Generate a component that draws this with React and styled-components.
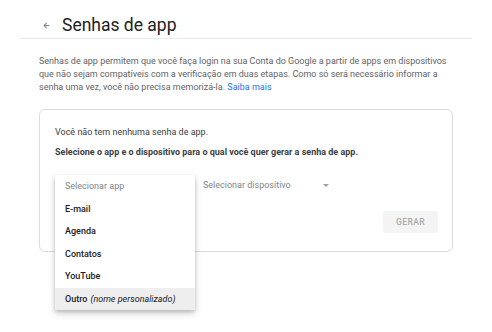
import styled, { createGlobalStyle } from 'styled-components';

const GlobalStyle = createGlobalStyle`
  html, body {
    margin: 0;
    padding: 0;
    background: #fff;
    font-family: Roboto, "Liberation Sans", Arial, sans-serif;
    -webkit-font-smoothing: antialiased;
  }
`;

const Page = styled.div`
  width: 492px;
  height: 332px;
  overflow: hidden;
`;

const Header = styled.header`
  margin: 0 20px;
  height: 39px;
  box-sizing: border-box;
  padding: 12px 0 0 22px;
  display: flex;
  align-items: center;
  gap: 11px;
  border-bottom: 1px solid #e8eaed;
`;

const BackArrow = styled.svg`
  width: 9px;
  height: 9px;
  fill: #5f6368;
`;

const Title = styled.h1`
  margin: 0;
  font-size: 17.5px;
  line-height: 22px;
  font-weight: 400;
  color: #202124;
`;

const Content = styled.main`
  padding: 16px 39px 0 39px;
`;

const Intro = styled.p`
  margin: 0;
  font-size: 9px;
  line-height: 13px;
  color: #5f6368;
`;

const Link = styled.a`
  color: #1a73e8;
  text-decoration: none;
`;

const Card = styled.section`
  position: relative;
  margin-top: 15px;
  width: 414px;
  height: 143px;
  box-sizing: border-box;
  border: 1px solid #dadce0;
  border-radius: 6px;
  padding: 16px 14px 18px 15px;
  display: flex;
  flex-direction: column;
`;

const CardText = styled.p`
  margin: 0 0 ${(p) => p.gap || 0}px;
  font-size: 9px;
  line-height: 13px;
  color: #3c4043;
  font-weight: ${(p) => (p.bold ? 700 : 400)};
`;

const SelectRow = styled.div`
  display: flex;
  align-items: center;
  height: 22px;
  margin-top: 15px;
  gap: 8px;
`;

const Select = styled.div`
  width: ${(p) => p.width}px;
  box-sizing: border-box;
  display: flex;
  align-items: center;
  justify-content: space-between;
  font-size: 9px;
  color: #80868b;
  padding-left: ${(p) => p.pad || 0}px;
`;

const Caret = styled.span`
  width: 0;
  height: 0;
  border-left: 3.5px solid transparent;
  border-right: 3.5px solid transparent;
  border-top: 3.5px solid #9aa0a6;
`;

const Actions = styled.div`
  display: flex;
  justify-content: flex-end;
  margin-top: auto;
`;

const Button = styled.button`
  width: 55px;
  height: 22px;
  border: none;
  border-radius: 3px;
  background: #f4f4f4;
  color: #a8abae;
  font-family: inherit;
  font-size: 8.5px;
  font-weight: 500;
  letter-spacing: 0.4px;
  padding: 0;
`;

const Menu = styled.ul`
  position: absolute;
  left: 15px;
  top: 65px;
  width: 140px;
  margin: 0;
  padding: 0;
  list-style: none;
  background: #fff;
  box-shadow: 0 2px 4px rgba(0, 0, 0, 0.2), 0 4px 8px rgba(0, 0, 0, 0.12);
  z-index: 2;
`;

const MenuItem = styled.li`
  height: 22.5px;
  display: flex;
  align-items: center;
  padding-left: 10px;
  font-size: 9px;
  font-weight: ${(p) => (p.placeholder ? 400 : 500)};
  color: ${(p) => (p.placeholder ? '#80868b' : '#202124')};
  background: ${(p) => (p.active ? '#eeeeee' : 'transparent')};

  em {
    margin-left: 3px;
    font-weight: 400;
  }
`;

const apps = ['E-mail', 'Agenda', 'Contatos', 'YouTube'];

const App = () => (
  <Page>
    <GlobalStyle />
    <Header>
      <BackArrow viewBox="0 0 24 24">
        <path d="M20 11H7.83l5.59-5.59L12 4l-8 8 8 8 1.41-1.41L7.83 13H20v-2z" />
      </BackArrow>
      <Title>Senhas de app</Title>
    </Header>
    <Content>
      <Intro>
        Senhas de app permitem que você faça login na sua Conta do Google a partir de apps em
        dispositivos que não sejam compatíveis com a verificação em duas etapas. Como só será
        necessário informar a senha uma vez, você não precisa memorizá-la.
        {' '}
        <Link href="#">Saiba mais</Link>
      </Intro>
      <Card>
        <CardText gap={7}>Você não tem nenhuma senha de app.</CardText>
        <CardText bold>Selecione o app e o dispositivo para o qual você quer gerar a senha de app.</CardText>
        <SelectRow>
          <Select width={140} pad={10}>Selecionar app</Select>
          <Select width={126}>
            Selecionar dispositivo
            <Caret />
          </Select>
        </SelectRow>
        <Actions>
          <Button type="button">GERAR</Button>
        </Actions>
        <Menu>
          <MenuItem placeholder>Selecionar app</MenuItem>
          {apps.map((name) => (
            <MenuItem key={name}>{name}</MenuItem>
          ))}
          <MenuItem active>
            Outro
            <em>(nome personalizado)</em>
          </MenuItem>
        </Menu>
      </Card>
    </Content>
  </Page>
);

export default App;
